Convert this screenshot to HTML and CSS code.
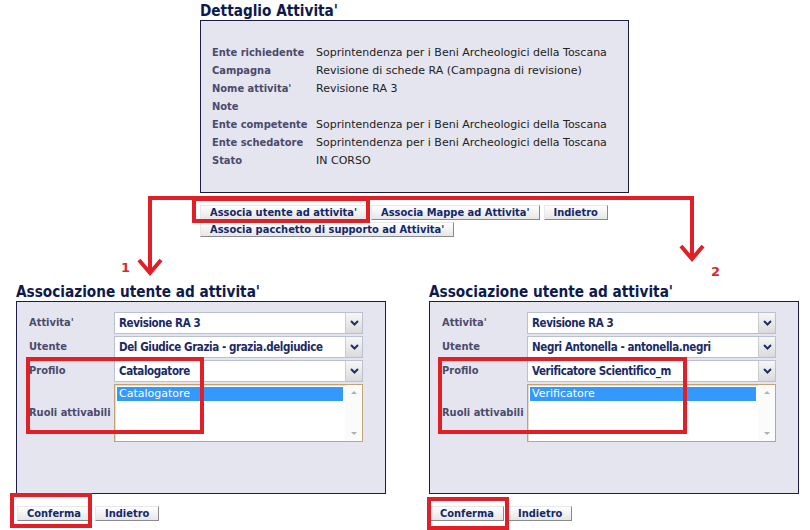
FILE: index.html
```html
<!DOCTYPE html>
<html lang="it">
<head>
    <meta charset="UTF-8">
    <title>Associazione utente ad attivita'</title>
    <link rel="stylesheet" href="styles.css">
</head>
<body>
<div class="page">

    <!-- Dettaglio dell'attivita' -->
    <section class="detail">
        <h2 class="title">Dettaglio Attivita'</h2>
        <div class="detail-box">
            <table class="info">
                <tr><th>Ente richiedente</th><td>Soprintendenza per i Beni Archeologici della Toscana</td></tr>
                <tr><th>Campagna</th><td>Revisione di schede RA (Campagna di revisione)</td></tr>
                <tr><th>Nome attivita'</th><td>Revisione RA 3</td></tr>
                <tr><th>Note</th><td></td></tr>
                <tr><th>Ente competente</th><td>Soprintendenza per i Beni Archeologici della Toscana</td></tr>
                <tr><th>Ente schedatore</th><td>Soprintendenza per i Beni Archeologici della Toscana</td></tr>
                <tr><th>Stato</th><td>IN CORSO</td></tr>
            </table>
        </div>
        <div class="actions">
            <div class="btn-row">
                <button class="btn">Associa utente ad attivita'</button>
                <button class="btn">Associa Mappe ad Attivita'</button>
                <button class="btn">Indietro</button>
            </div>
            <div class="btn-row">
                <button class="btn">Associa pacchetto di supporto ad Attivita'</button>
            </div>
        </div>
    </section>

    <!-- Due esempi di associazione -->
    <div class="forms">
        <section class="assoc">
            <h2 class="title">Associazione utente ad attivita'</h2>
            <div class="assoc-box">
                <div class="form-grid">
                    <label>Attivita'</label>
                    <div class="combo"><span>Revisione RA 3</span><i class="drop"><svg viewBox="0 0 9 6"><path d="M1 1l3.5 3.5L8 1"/></svg></i></div>
                    <label>Utente</label>
                    <div class="combo"><span>Del Giudice Grazia - grazia.delgiudice</span><i class="drop"><svg viewBox="0 0 9 6"><path d="M1 1l3.5 3.5L8 1"/></svg></i></div>
                    <label>Profilo</label>
                    <div class="combo"><span>Catalogatore</span><i class="drop"><svg viewBox="0 0 9 6"><path d="M1 1l3.5 3.5L8 1"/></svg></i></div>
                    <label class="mid">Ruoli attivabili</label>
                    <div class="listbox">
                        <ul><li class="sel">Catalogatore</li></ul>
                        <div class="scroll"><b class="up"></b><b class="down"></b></div>
                    </div>
                </div>
            </div>
            <div class="btn-row foot">
                <button class="btn">Conferma</button>
                <button class="btn">Indietro</button>
            </div>
        </section>

        <section class="assoc">
            <h2 class="title">Associazione utente ad attivita'</h2>
            <div class="assoc-box">
                <div class="form-grid">
                    <label>Attivita'</label>
                    <div class="combo"><span>Revisione RA 3</span><i class="drop"><svg viewBox="0 0 9 6"><path d="M1 1l3.5 3.5L8 1"/></svg></i></div>
                    <label>Utente</label>
                    <div class="combo"><span>Negri Antonella - antonella.negri</span><i class="drop"><svg viewBox="0 0 9 6"><path d="M1 1l3.5 3.5L8 1"/></svg></i></div>
                    <label>Profilo</label>
                    <div class="combo"><span>Verificatore Scientifico_m</span><i class="drop"><svg viewBox="0 0 9 6"><path d="M1 1l3.5 3.5L8 1"/></svg></i></div>
                    <label class="mid">Ruoli attivabili</label>
                    <div class="listbox">
                        <ul><li class="sel">Verificatore</li></ul>
                        <div class="scroll"><b class="up"></b><b class="down"></b></div>
                    </div>
                </div>
            </div>
            <div class="btn-row foot">
                <button class="btn">Conferma</button>
                <button class="btn">Indietro</button>
            </div>
        </section>
    </div>

    <!-- Evidenziazioni rosse sopra la pagina -->
    <svg class="marks" width="810" height="530" viewBox="0 0 810 530">
        <g fill="none" stroke="#e11f26" stroke-width="4">
            <path d="M150 273V198H692V259"/>
            <path d="M139 260l11 13 11-13"/>
            <path d="M681 246l11 13 11-13"/>
            <rect x="194" y="199" width="174" height="22"/>
            <rect x="28" y="359" width="174" height="73"/>
            <rect x="440" y="359" width="245" height="73"/>
            <rect x="12" y="495" width="78" height="31"/>
            <rect x="429" y="499" width="78" height="29"/>
        </g>
        <text x="121" y="272" class="num">1</text>
        <text x="711" y="276" class="num">2</text>
    </svg>
</div>
</body>
</html>
```

FILE: styles.css
```css
* {
    box-sizing: border-box;
}
body {
    margin: 0;
    background: #fff;
    font-family: "DejaVu Sans", Verdana, sans-serif;
    font-size: 11px;
    color: #222;
}
.page {
    position: relative;
    width: 810px;
    height: 530px;
    overflow: hidden;
}

/* i testi in grassetto sono piu' stretti */
.title, .info th, .btn, .form-grid label, .combo span {
    font-family: "DejaVu Sans Condensed", "DejaVu Sans", sans-serif;
    font-weight: bold;
}

.title {
    margin: 0;
    font-size: 15.2px;
    line-height: 17px;
    color: #0d1a4d;
}

/* dettaglio */
.detail {
    margin-left: 200px;
    padding-top: 3px;
}
.detail-box {
    width: 429px;
    height: 173px;
    border: 1px solid #1c1c44;
    background: #e5e5ef;
    padding: 22px 0 0 11px;
}
.info {
    border-collapse: collapse;
}
.info th, .info td {
    height: 18px;
    padding: 0;
    text-align: left;
    vertical-align: middle;
    white-space: nowrap;
}
.info th {
    width: 104px;
    color: #4a4a6c;
}

/* bottoni */
.actions {
    margin-top: 12px;
}
.btn-row {
    display: flex;
    gap: 4px;
    margin-bottom: 2px;
}
.btn {
    font-size: 11px;
    color: #13286a;
    height: 15px;
    line-height: 13px;
    padding: 0 9px;
    background: linear-gradient(#ffffff, #e6e6e6);
    border: 1px solid;
    border-color: #e8e8e8 #8a8a8a #8a8a8a #e8e8e8;
    cursor: pointer;
}

/* associazione */
.forms {
    display: flex;
    gap: 43px;
    padding-left: 16px;
    margin-top: 47px;
}
.assoc {
    width: 370px;
}
.assoc-box {
    height: 193px;
    border: 1px solid #1c1c44;
    background: #e5e5ef;
    padding: 10px 0 0 12px;
}
.form-grid {
    display: grid;
    grid-template-columns: 85px 249px;
    row-gap: 2px;
}
.form-grid label {
    color: #4a4a6c;
    line-height: 22px;
}
.form-grid label.mid {
    align-self: center;
}
.combo {
    display: flex;
    height: 22px;
    background: #fff;
    border: 1px solid #b9c0cf;
}
.combo span {
    flex: 1;
    padding-left: 4px;
    line-height: 20px;
    font-size: 11.5px;
    letter-spacing: -0.4px;
    color: #1a2a66;
    white-space: nowrap;
    overflow: hidden;
}
.drop {
    width: 17px;
    display: flex;
    align-items: center;
    justify-content: center;
    background: linear-gradient(#f7f7f7, #dadada);
    border-left: 1px solid #c9ccd4;
}
.drop svg {
    width: 9px;
    height: 6px;
    fill: none;
    stroke: #1e2f66;
    stroke-width: 2;
}
.listbox {
    display: flex;
    height: 58px;
    background: #fff;
    border: 1px solid #c2a474;
    box-shadow: inset 1px 1px 0 #e8dcc8;
}
.listbox ul {
    flex: 1;
    margin: 0;
    padding: 2px;
    list-style: none;
}
.listbox li {
    height: 14px;
    line-height: 14px;
    padding-left: 2px;
    font-size: 11px;
    color: #fff;
}
.listbox li.sel {
    background: #3399ff;
}
.scroll {
    width: 17px;
    position: relative;
    background: #fbfbfb;
}
.scroll b {
    position: absolute;
    left: 6px;
    width: 0;
    height: 0;
    border-left: 3px solid transparent;
    border-right: 3px solid transparent;
}
.scroll .up {
    top: 6px;
    border-bottom: 3px solid #b0b0b0;
}
.scroll .down {
    bottom: 6px;
    border-top: 3px solid #b0b0b0;
}
.foot {
    margin-top: 12px;
    padding-left: 1px;
}

/* segni rossi */
.marks {
    position: absolute;
    left: 0;
    top: 0;
    pointer-events: none;
}
.num {
    font-family: "DejaVu Sans", sans-serif;
    font-size: 13px;
    font-weight: bold;
    fill: #d42a2f;
}
```
